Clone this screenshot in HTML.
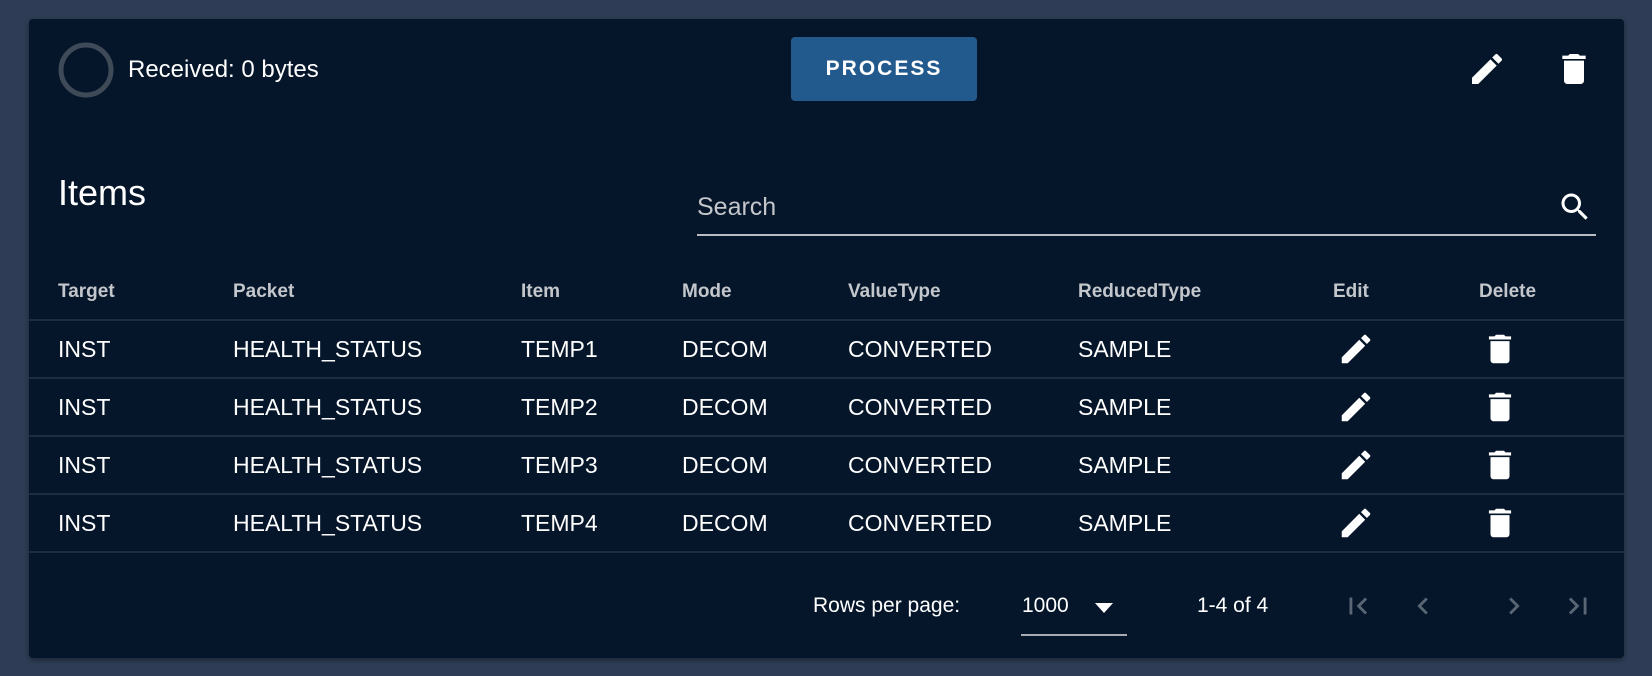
<!DOCTYPE html>
<html><head><meta charset="utf-8"><style>
*{margin:0;padding:0;box-sizing:border-box}
body{width:1652px;height:676px;background:#2e3d55;font-family:"Liberation Sans",sans-serif;color:#fff;position:relative;overflow:hidden}
.card{position:absolute;left:29px;top:19px;width:1595px;height:639px;background:#05162a;border-radius:4px;box-shadow:0 2px 6px rgba(0,0,0,.4)}
.a{position:absolute;white-space:nowrap}
.hd{font-size:19px;font-weight:bold;color:#c3c6cb}
.row{position:absolute;left:0;width:1595px;height:58px;border-top:2px solid #1d2c3e}
.c{position:absolute;font-size:23px;top:15px}
svg{position:absolute}
</style></head><body>
<div class="card">
 <svg style="left:28px;top:22px" width="58" height="58" viewBox="0 0 58 58"><circle cx="29" cy="29" r="25" fill="none" stroke="#3e4a58" stroke-width="5"/></svg>
 <div class="a" style="left:99px;top:37px;font-size:24px">Received: 0 bytes</div>
 <div class="a" style="left:762px;top:18px;width:186px;height:64px;background:#235a8e;border-radius:4px;font-size:21px;letter-spacing:2px;line-height:64px;text-align:center;font-weight:bold">PROCESS</div>
 <svg style="left:1438px;top:30px" width="40" height="40" viewBox="0 0 24 24"><path fill="#fff" d="M3 17.25V21h3.75L17.81 9.94l-3.75-3.75L3 17.25zM20.71 7.04a1 1 0 000-1.41l-2.34-2.34a1 1 0 00-1.41 0l-1.83 1.83 3.75 3.75 1.83-1.83z"/></svg>
 <svg style="left:1525px;top:30px" width="40" height="40" viewBox="0 0 24 24"><path fill="#fff" d="M6 19c0 1.1.9 2 2 2h8c1.1 0 2-.9 2-2V7H6v12zM19 4h-3.5l-1-1h-5l-1 1H5v2h14V4z"/></svg>
 <div class="a" style="left:29px;top:153px;font-size:36px">Items</div>
 <div class="a" style="left:668px;top:174px;font-size:25px;color:#c3c6cb">Search</div>
 <div class="a" style="left:668px;top:215px;width:899px;height:2px;background:#b9bcc1"></div>
 <svg style="left:1528px;top:170px" width="36" height="36" viewBox="0 0 24 24"><path fill="#fff" d="M15.5 14h-.79l-.28-.27A6.47 6.47 0 0016 9.5 6.5 6.5 0 109.5 16c1.61 0 3.090-.59 4.23-1.57l.27.28v.79l5 4.99L20.49 19l-4.99-5zm-6 0C7.01 14 5 11.99 5 9.5S7.01 5 9.5 5 14 7.01 14 9.5 11.990 14 9.5 14z"/></svg>
 <div class="a hd" style="left:29px;top:262px">Target</div>
 <div class="a hd" style="left:204px;top:262px">Packet</div>
 <div class="a hd" style="left:492px;top:262px">Item</div>
 <div class="a hd" style="left:653px;top:262px">Mode</div>
 <div class="a hd" style="left:819px;top:262px">ValueType</div>
 <div class="a hd" style="left:1049px;top:262px">ReducedType</div>
 <div class="a hd" style="left:1304px;top:262px">Edit</div>
 <div class="a hd" style="left:1450px;top:262px">Delete</div>

 <div class="row" style="top:300px"><div class="c" style="left:29px">INST</div><div class="c" style="left:204px">HEALTH_STATUS</div><div class="c" style="left:492px">TEMP1</div><div class="c" style="left:653px">DECOM</div><div class="c" style="left:819px">CONVERTED</div><div class="c" style="left:1049px">SAMPLE</div>
 <svg style="left:1308px;top:9px" width="38" height="38" viewBox="0 0 24 24"><path fill="#fff" d="M3 17.25V21h3.75L17.81 9.94l-3.75-3.75L3 17.25zM20.71 7.04a1 1 0 000-1.41l-2.34-2.34a1 1 0 00-1.41 0l-1.83 1.83 3.75 3.75 1.83-1.83z"/></svg>
 <svg style="left:1452px;top:9px" width="38" height="38" viewBox="0 0 24 24"><path fill="#fff" d="M6 19c0 1.1.9 2 2 2h8c1.1 0 2-.9 2-2V7H6v12zM19 4h-3.5l-1-1h-5l-1 1H5v2h14V4z"/></svg></div>
 <div class="row" style="top:358px"><div class="c" style="left:29px">INST</div><div class="c" style="left:204px">HEALTH_STATUS</div><div class="c" style="left:492px">TEMP2</div><div class="c" style="left:653px">DECOM</div><div class="c" style="left:819px">CONVERTED</div><div class="c" style="left:1049px">SAMPLE</div>
 <svg style="left:1308px;top:9px" width="38" height="38" viewBox="0 0 24 24"><path fill="#fff" d="M3 17.25V21h3.75L17.81 9.94l-3.75-3.75L3 17.25zM20.71 7.04a1 1 0 000-1.41l-2.34-2.34a1 1 0 00-1.41 0l-1.83 1.83 3.75 3.75 1.83-1.83z"/></svg>
 <svg style="left:1452px;top:9px" width="38" height="38" viewBox="0 0 24 24"><path fill="#fff" d="M6 19c0 1.1.9 2 2 2h8c1.1 0 2-.9 2-2V7H6v12zM19 4h-3.5l-1-1h-5l-1 1H5v2h14V4z"/></svg></div>
 <div class="row" style="top:416px"><div class="c" style="left:29px">INST</div><div class="c" style="left:204px">HEALTH_STATUS</div><div class="c" style="left:492px">TEMP3</div><div class="c" style="left:653px">DECOM</div><div class="c" style="left:819px">CONVERTED</div><div class="c" style="left:1049px">SAMPLE</div>
 <svg style="left:1308px;top:9px" width="38" height="38" viewBox="0 0 24 24"><path fill="#fff" d="M3 17.25V21h3.75L17.81 9.94l-3.75-3.75L3 17.25zM20.71 7.04a1 1 0 000-1.41l-2.34-2.34a1 1 0 00-1.41 0l-1.83 1.83 3.75 3.75 1.83-1.83z"/></svg>
 <svg style="left:1452px;top:9px" width="38" height="38" viewBox="0 0 24 24"><path fill="#fff" d="M6 19c0 1.1.9 2 2 2h8c1.1 0 2-.9 2-2V7H6v12zM19 4h-3.5l-1-1h-5l-1 1H5v2h14V4z"/></svg></div>
 <div class="row" style="top:474px;height:60px;border-bottom:2px solid #1d2c3e"><div class="c" style="left:29px">INST</div><div class="c" style="left:204px">HEALTH_STATUS</div><div class="c" style="left:492px">TEMP4</div><div class="c" style="left:653px">DECOM</div><div class="c" style="left:819px">CONVERTED</div><div class="c" style="left:1049px">SAMPLE</div>
 <svg style="left:1308px;top:9px" width="38" height="38" viewBox="0 0 24 24"><path fill="#fff" d="M3 17.25V21h3.75L17.81 9.94l-3.75-3.75L3 17.25zM20.71 7.04a1 1 0 000-1.41l-2.34-2.34a1 1 0 00-1.41 0l-1.83 1.83 3.75 3.75 1.83-1.83z"/></svg>
 <svg style="left:1452px;top:9px" width="38" height="38" viewBox="0 0 24 24"><path fill="#fff" d="M6 19c0 1.1.9 2 2 2h8c1.1 0 2-.9 2-2V7H6v12zM19 4h-3.5l-1-1h-5l-1 1H5v2h14V4z"/></svg></div>

 <div class="a" style="left:784px;top:575px;font-size:21px">Rows per page:</div>
 <div class="a" style="left:993px;top:575px;font-size:21px">1000</div>
 <svg style="left:1064px;top:583px" width="22" height="12" viewBox="0 0 22 12"><path fill="#fff" d="M2 1h18l-9 10z"/></svg>
 <div class="a" style="left:992px;top:615px;width:106px;height:2px;background:#a8abb1"></div>
 <div class="a" style="left:1168px;top:575px;font-size:21px">1-4 of 4</div>
 <svg style="left:1312px;top:570px" width="34" height="34" viewBox="0 0 24 24"><path fill="#5b6675" d="M18.41 16.59L13.82 12l4.59-4.59L17 6l-6 6 6 6zM6 6h2v12H6z"/></svg>
 <svg style="left:1377px;top:570px" width="34" height="34" viewBox="0 0 24 24"><path fill="#5b6675" d="M15.41 7.41L14 6l-6 6 6 6 1.41-1.41L10.83 12z"/></svg>
 <svg style="left:1468px;top:570px" width="34" height="34" viewBox="0 0 24 24"><path fill="#5b6675" d="M10 6L8.59 7.41 13.17 12l-4.58 4.59L10 18l6-6z"/></svg>
 <svg style="left:1532px;top:570px" width="34" height="34" viewBox="0 0 24 24"><path fill="#5b6675" d="M5.59 7.41L10.18 12l-4.59 4.59L7 18l6-6-6-6zM16 6h2v12h-2z"/></svg>
</div>
</body></html>
